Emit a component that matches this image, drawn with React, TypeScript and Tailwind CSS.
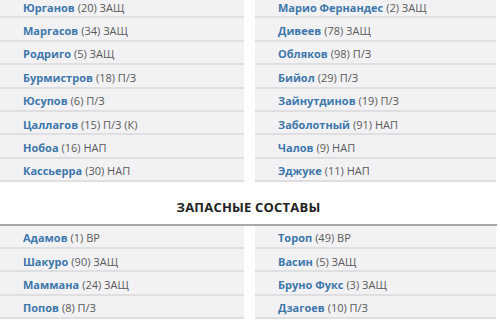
const main: [string, string][][] = [
  [
    ['Юрганов', '(20) ЗАЩ'],
    ['Маргасов', '(34) ЗАЩ'],
    ['Родриго', '(5) ЗАЩ'],
    ['Бурмистров', '(18) П/З'],
    ['Юсупов', '(6) П/З'],
    ['Цаллагов', '(15) П/З (К)'],
    ['Нобоа', '(16) НАП'],
    ['Кассьерра', '(30) НАП'],
  ],
  [
    ['Марио Фернандес', '(2) ЗАЩ'],
    ['Дивеев', '(78) ЗАЩ'],
    ['Обляков', '(98) П/З'],
    ['Бийол', '(29) П/З'],
    ['Зайнутдинов', '(19) П/З'],
    ['Заболотный', '(91) НАП'],
    ['Чалов', '(9) НАП'],
    ['Эджуке', '(11) НАП'],
  ],
];

const subs: [string, string][][] = [
  [
    ['Адамов', '(1) ВР'],
    ['Шакуро', '(90) ЗАЩ'],
    ['Маммана', '(24) ЗАЩ'],
    ['Попов', '(8) П/З'],
  ],
  [
    ['Тороп', '(49) ВР'],
    ['Васин', '(5) ЗАЩ'],
    ['Бруно Фукс', '(3) ЗАЩ'],
    ['Дзагоев', '(10) П/З'],
  ],
];

const PlayerColumn = ({ players }: { players: [string, string][] }) => (
  <div className="flex flex-col">
    {players.map(([name, info]) => (
      <div
        key={name}
        className="h-[23.4px] flex items-center pt-[3px] pl-[23px] bg-[#f2f2f4] border-b-2 border-[#dfdfe2] text-[11px] leading-none"
      >
        <span className="font-bold text-[#3d77ab]">{name}</span>
        <span className="ml-[3px] text-[#5a5a5a]">{info}</span>
      </div>
    ))}
  </div>
);

export default function App() {
  return (
    <div className="w-[500px] h-[320px] overflow-hidden bg-white font-['Open_Sans',sans-serif]">
      <div className="-mt-[5px] w-[497px] grid grid-cols-[244px_241px] gap-x-[11px]">
        {main.map((col, i) => (
          <PlayerColumn key={i} players={col} />
        ))}
      </div>

      <div className="w-[497px] mt-[16px] pb-[6px] border-b-2 border-[#a9a9ab] text-center text-[13px] font-bold text-[#222] tracking-[0.2px]">
        ЗАПАСНЫЕ СОСТАВЫ
      </div>

      <div className="w-[497px] grid grid-cols-[244px_241px] gap-x-[11px]">
        {subs.map((col, i) => (
          <PlayerColumn key={i} players={col} />
        ))}
      </div>
    </div>
  );
}
